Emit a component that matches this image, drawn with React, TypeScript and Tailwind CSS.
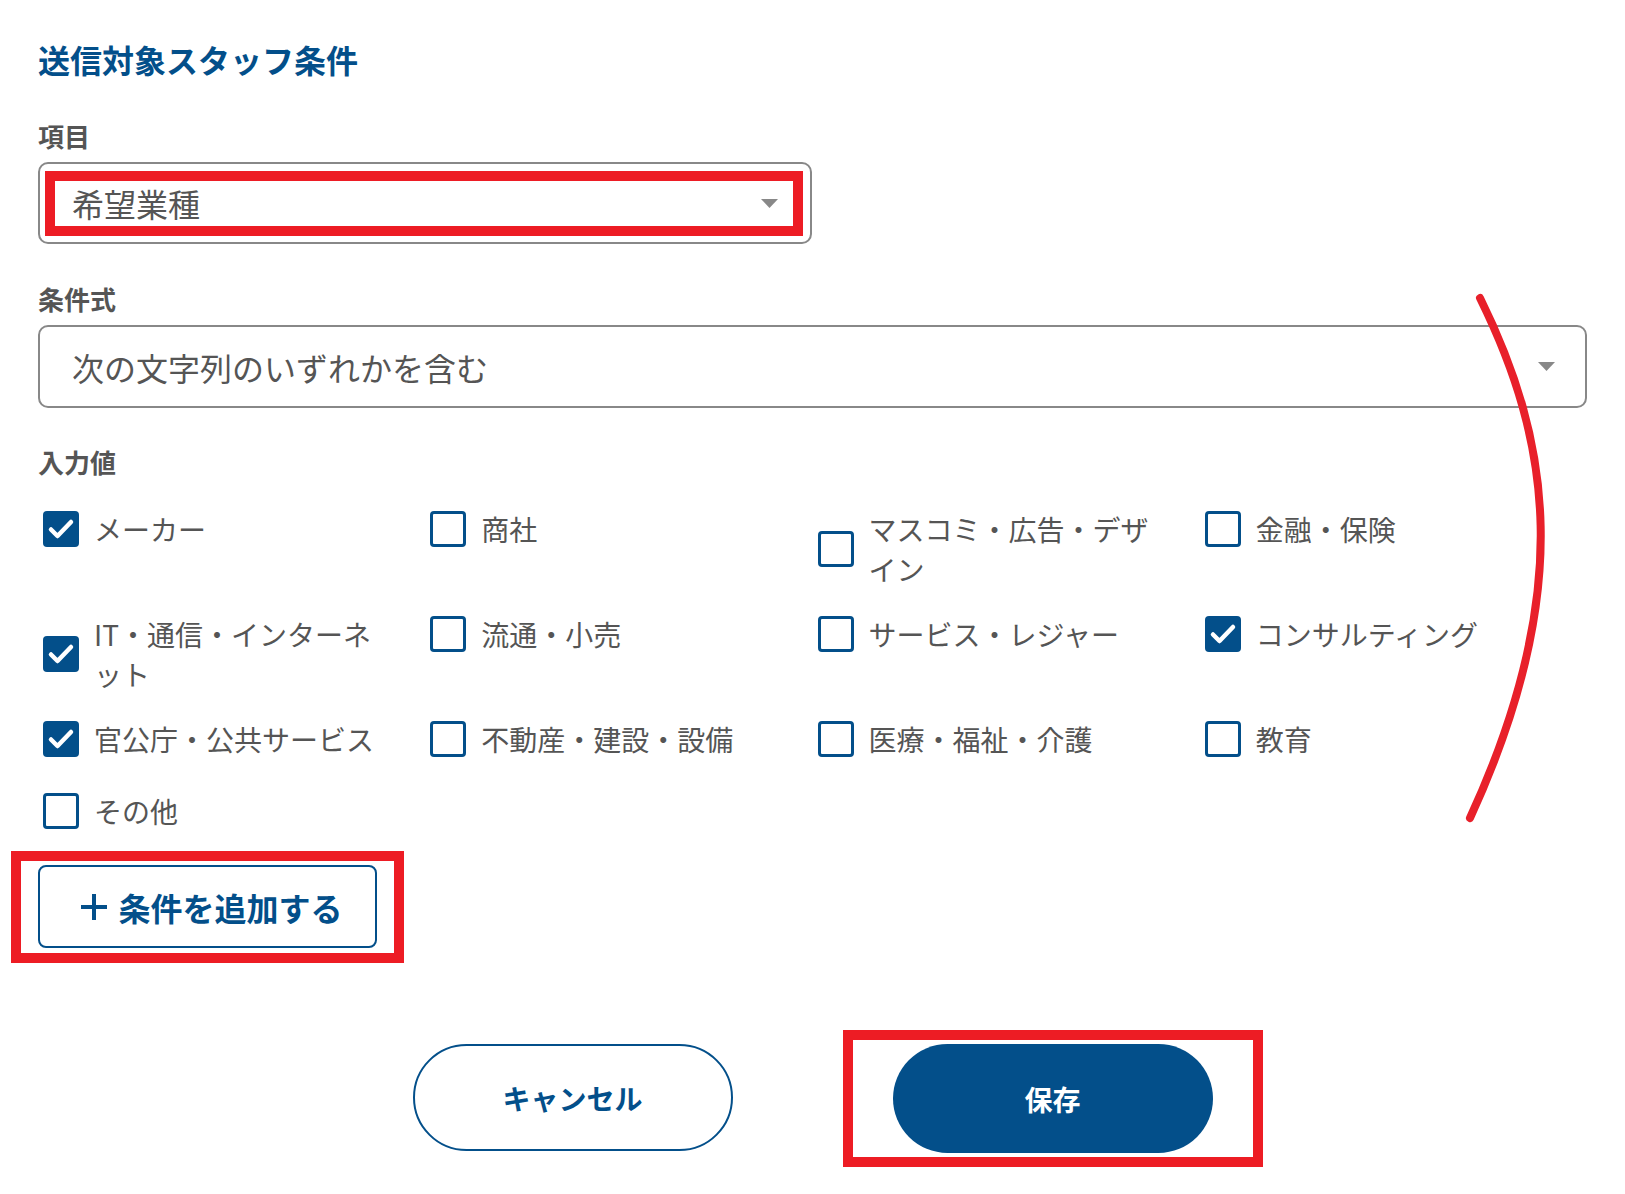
import React from "react";

type Option = { label: string; checked: boolean };

const options: Option[] = [
  { label: "メーカー", checked: true },
  { label: "商社", checked: false },
  { label: "マスコミ・広告・デザイン", checked: false },
  { label: "金融・保険", checked: false },
  { label: "IT・通信・インターネット", checked: true },
  { label: "流通・小売", checked: false },
  { label: "サービス・レジャー", checked: false },
  { label: "コンサルティング", checked: true },
  { label: "官公庁・公共サービス", checked: true },
  { label: "不動産・建設・設備", checked: false },
  { label: "医療・福祉・介護", checked: false },
  { label: "教育", checked: false },
  { label: "その他", checked: false },
];

function Caret() {
  return (
    <svg width="17" height="9" viewBox="0 0 17 9" className="shrink-0">
      <path d="M0 0h17L8.5 9z" fill="#888888" />
    </svg>
  );
}

function Checkbox({ checked }: { checked: boolean }) {
  if (checked) {
    return (
      <span className="ml-[5px] flex h-[36px] w-[36px] shrink-0 items-center justify-center rounded-[4px] bg-[#034f8a]">
        <svg width="28" height="28" viewBox="0 0 28 28" fill="none">
          <path d="M4 14.5l6.5 6.5L24 7" stroke="white" strokeWidth="4.5" strokeLinecap="round" strokeLinejoin="round" />
        </svg>
      </span>
    );
  }
  return <span className="ml-[5px] h-[36px] w-[36px] shrink-0 rounded-[4px] border-[3px] border-[#034f8a] bg-white" />;
}

export default function App() {
  return (
    <div
      className="relative min-h-[1194px] w-full bg-white text-[#555555]"
      style={{ fontFamily: '"Noto Sans CJK JP", "Noto Sans", sans-serif' }}
    >
      <div className="flex flex-col px-[38px] pt-[39px]">
        {/* Heading */}
        <h1 className="text-[32px] font-bold leading-[40px] text-[#034f8a]">送信対象スタッフ条件</h1>

        {/* 項目 */}
        <div className="mt-[39px] text-[26px] font-bold leading-[36px]">項目</div>
        <div className="relative mt-[8px] flex h-[82px] w-[774px] items-center justify-between rounded-[10px] border-2 border-[#888888] pl-[32px] pr-[32px]">
          <span className="text-[32px] leading-none">希望業種</span>
          <Caret />
          <div className="pointer-events-none absolute left-[5px] right-[7px] top-[7px] bottom-[6px] border-[10px] border-[#ed1c24]" />
        </div>

        {/* 条件式 */}
        <div className="mt-[37px] text-[26px] font-bold leading-[36px]">条件式</div>
        <div className="mt-[8px] flex h-[83px] w-full items-center justify-between rounded-[10px] border-2 border-[#888888] pl-[32px] pr-[30px]">
          <span className="text-[32px] leading-none">次の文字列のいずれかを含む</span>
          <Caret />
        </div>

        {/* 入力値 */}
        <div className="mt-[36px] text-[26px] font-bold leading-[36px]">入力値</div>
        <div className="mt-[29px] grid grid-cols-4 items-start gap-y-[25px]">
          {options.map((o, i) => (
            <label key={o.label} className={`flex items-center gap-[15px] ${i === 12 ? "mt-[7px]" : ""}`}>
              <Checkbox checked={o.checked} />
              <span className="max-w-[300px] text-[28px] leading-[40px]">{o.label}</span>
            </label>
          ))}
        </div>

        {/* Add condition */}
        <div className="mt-[34px] flex">
          <button className="relative flex h-[83px] w-[339px] items-center justify-center gap-[10px] rounded-[8px] border-2 border-[#034f8a] bg-white pl-[8px] text-[32px] font-bold text-[#034f8a]">
            <svg width="28" height="28" viewBox="0 0 28 28">
              <path d="M14 1v26M1 14h26" stroke="#034f8a" strokeWidth="4" />
            </svg>
            <span className="leading-none">条件を追加する</span>
            <span className="pointer-events-none absolute -left-[29px] -right-[29px] -top-[16px] -bottom-[17px] border-[10px] border-[#ed1c24]" />
          </button>
        </div>

        {/* Footer buttons */}
        <div className="mt-[96px] flex justify-center gap-[160px]">
          <button className="flex h-[107px] w-[320px] items-center justify-center rounded-full border-2 border-[#034f8a] bg-white text-[28px] font-bold text-[#034f8a]">
            キャンセル
          </button>
          <button className="relative flex h-[109px] w-[320px] items-center justify-center rounded-full bg-[#034f8a] text-[28px] font-bold text-white">
            保存
            <span className="pointer-events-none absolute -left-[50px] -right-[50px] -top-[14px] -bottom-[14px] border-[10px] border-[#ed1c24]" />
          </button>
        </div>
      </div>

      {/* Hand-drawn annotation curve */}
      <svg className="pointer-events-none absolute left-0 top-0" width="1625" height="1194" viewBox="0 0 1625 1194" fill="none">
        <path d="M1480 298C1550 440 1575 590 1470 818" stroke="#e8202a" strokeWidth="8" strokeLinecap="round" />
      </svg>
    </div>
  );
}
